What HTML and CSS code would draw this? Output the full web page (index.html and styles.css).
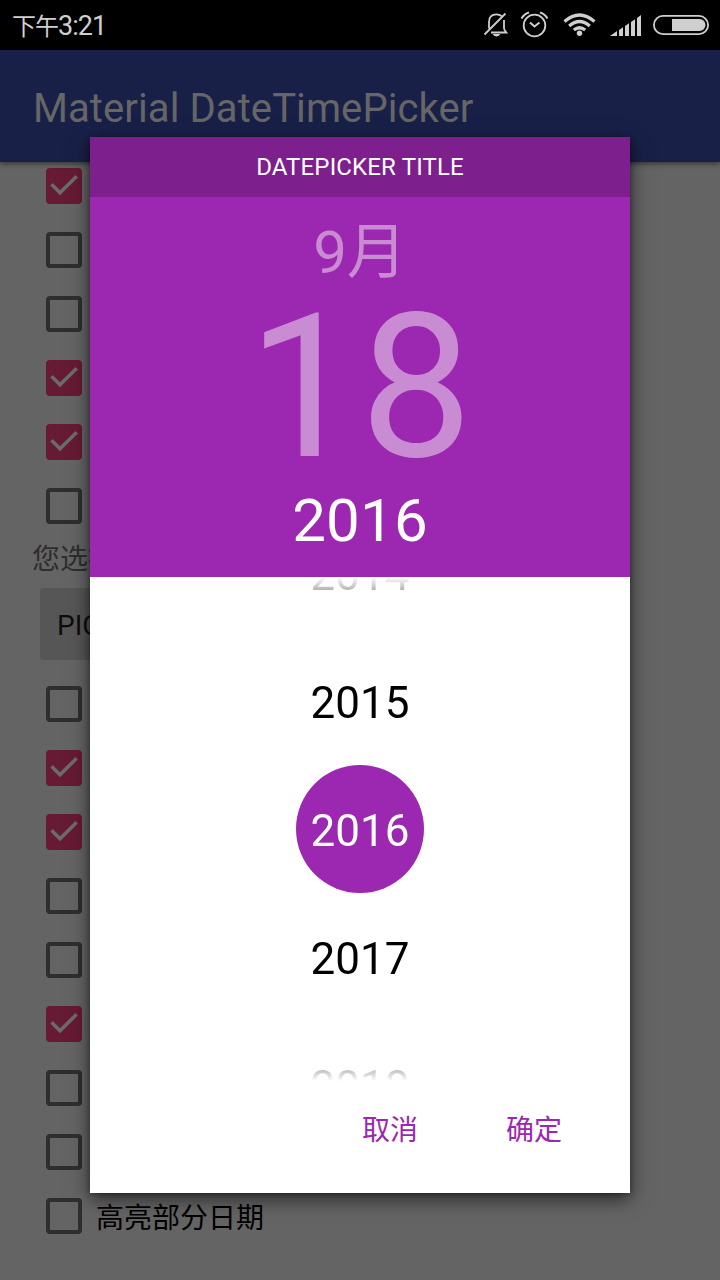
FILE: index.html
```
<!DOCTYPE html>
<html lang="zh-CN">
<head>
<meta charset="utf-8">
<title>Material DateTimePicker</title>
<link rel="stylesheet" href="styles.css">
</head>
<body>
<svg class="defs" width="0" height="0">
  <symbol id="on" viewBox="0 0 36 36"><rect width="36" height="36" rx="4" fill="#661a34"/><path d="M5.500 16.300 L14 24.800 L30.700 8.200" fill="none" stroke="#6b6b6b" stroke-width="3.600"/></symbol>
  <symbol id="off" viewBox="0 0 36 36"><rect x="2" y="2" width="32" height="32" rx="2" fill="none" stroke="#2e2e2e" stroke-width="4"/></symbol>
</svg>
<div class="screen">
  <header class="status">
    <div class="clock"><span class="ampm">下午</span><span class="time">3:21</span></div>
    <svg class="status-icons" width="250" height="50" viewBox="470 0 250 50" fill="none" stroke="#cfcfcf" stroke-width="1.800">
      <path d="M484.500 34.500 L505.500 13.500 M489 28.500 V22 C489 17 492 14.300 496.500 14.300 C498.500 14.300 500 14.800 501.500 16 M504 20 V28 C504 30 505 31 506.300 32.500 H491"/>
      <path d="M492.500 34 H500.500 Q496.500 39 492.500 34Z" fill="#cfcfcf" stroke="none"/>
      <circle cx="534.500" cy="25.500" r="10.800"/><path d="M530 22.500 L534.500 26.500 L539.500 22.500" stroke-width="2"/>
      <path d="M521.500 18.500 Q524 14 529 12.500 M547.500 18.500 Q545 14 540 12.500" stroke-width="2"/>
      <g stroke-width="3.200"><path d="M564.500 21.500 Q579.500 8.500 594.500 21.500 M569.200 26 Q579.500 17 589.800 26 M573.800 30 Q579.500 25.500 585.200 30"/></g>
      <circle cx="579.500" cy="33.300" r="2.700" fill="#cfcfcf" stroke="none"/>
      <path d="M610 36 L617 31 V36Z M619 30 L623 27.300 V36 H619Z M625 26 L629 23.300 V36 H625Z M631 22 L635 19.300 V36 H631Z M637 18 L641 15 V36 H637Z" fill="#cfcfcf" stroke="none"/>
      <rect x="653.900" y="15.900" width="54.200" height="18.200" rx="9.100"/>
      <path d="M672 19 H699.500 A6 6 0 0 1 699.500 31 H672Z" fill="#cfcfcf" stroke="none"/>
    </svg>
  </header>
  <div class="appbar">Material DateTimePicker</div>
  <main class="content">
    <div class="row"><svg class="box"><use href="#on"/></svg></div>
    <div class="row"><svg class="box"><use href="#off"/></svg></div>
    <div class="row"><svg class="box"><use href="#off"/></svg></div>
    <div class="row"><svg class="box"><use href="#on"/></svg></div>
    <div class="row"><svg class="box"><use href="#on"/></svg></div>
    <div class="row"><svg class="box"><use href="#off"/></svg></div>
    <div class="hint">您选择</div>
    <div class="pick">PICK</div>
    <div class="row"><svg class="box"><use href="#off"/></svg></div>
    <div class="row"><svg class="box"><use href="#on"/></svg></div>
    <div class="row"><svg class="box"><use href="#on"/></svg></div>
    <div class="row"><svg class="box"><use href="#off"/></svg></div>
    <div class="row"><svg class="box"><use href="#off"/></svg></div>
    <div class="row"><svg class="box"><use href="#on"/></svg></div>
    <div class="row"><svg class="box"><use href="#off"/></svg></div>
    <div class="row"><svg class="box"><use href="#off"/></svg></div>
    <div class="row"><svg class="box"><use href="#off"/></svg><span class="label">高亮部分日期</span></div>
  </main>
  <section class="dialog">
    <div class="title">DATEPICKER TITLE</div>
    <div class="date">
      <div class="month">9月</div>
      <div class="day">18</div>
      <div class="year">2016</div>
    </div>
    <div class="years">
      <div class="item">2014</div>
      <div class="item">2015</div>
      <div class="item selected">2016</div>
      <div class="item">2017</div>
      <div class="item">2018</div>
    </div>
    <div class="actions"><span>取消</span><span>确定</span></div>
  </section>
</div>
</body>
</html>
```
FILE: styles.css
```
* { box-sizing: border-box; }
body { margin: 0; font-family: Roboto, "Noto Sans CJK SC", sans-serif; }
.defs { position: absolute; }
.screen { position: relative; width: 720px; height: 1280px; overflow: hidden; background: #646464; }
.status { display: flex; justify-content: space-between; align-items: center; height: 50px; padding-left: 12px; background: #000; color: #cfcfcf; }
.clock { display: flex; align-items: baseline; line-height: 50px; padding-top: 3px; white-space: nowrap; }
.ampm { font-size: 24px; letter-spacing: -1px; }
.time { font-size: 27px; letter-spacing: -1px; }
.appbar { position: relative; height: 112px; padding: 3px 33px 0; line-height: 112px; font-size: 40px; letter-spacing: .09px; color: #666; background: #192048; box-shadow: 0 2px 5px rgba(0,0,0,.45); white-space: nowrap; }
.content { display: flex; flex-direction: column; margin-top: -8px; }
.row { display: flex; align-items: center; flex: none; height: 64px; padding-left: 46px; }
.box { width: 36px; height: 36px; flex: none; }
.label { margin-left: 14px; font-size: 28px; line-height: 40px; padding-top: 6px; color: #000; white-space: nowrap; }
.hint { height: 38px; padding: 3px 0 0 32px; line-height: 38px; font-size: 28px; color: #2e2e2e; }
.pick { width: 200px; height: 72px; margin: 12px 0 12px 40px; padding-left: 17px; border-radius: 4px; background: #565656; line-height: 76px; font-size: 28px; color: #0d0d0d; }
.dialog { position: absolute; left: 90px; top: 137px; width: 540px; height: 1056px; display: flex; flex-direction: column; background: #fff; box-shadow: 0 6px 18px rgba(0,0,0,.6), 0 1px 5px rgba(0,0,0,.35); }
.title { height: 60px; line-height: 60px; text-align: center; font-size: 24px; letter-spacing: .15px; color: #fff; background: #7d1f8d; }
.date { display: flex; flex-direction: column; align-items: center; height: 380px; padding-top: 21px; background: #9c27b0; color: #c98cd3; }
.month { font-size: 60px; line-height: 70px; height: 70px; }
.day { font-size: 200px; line-height: 200px; height: 198px; }
.year { font-size: 60px; line-height: 70px; height: 70px; letter-spacing: .2px; color: #fff; }
.years { display: flex; flex-direction: column; align-items: center; justify-content: center; height: 504px; overflow: hidden; mask-image: linear-gradient(to bottom, transparent 0, #000 44px, #000 460px, transparent 504px); }
.item { flex: none; width: 128px; height: 128px; padding-top: 2px; line-height: 128px; text-align: center; font-size: 44px; color: #000; }
.selected { border-radius: 50%; background: #9c27b0; color: #fff; }
.actions { display: flex; justify-content: flex-end; gap: 88px; padding: 30px 68px 0 0; line-height: 40px; font-size: 28px; color: #9c27b0; }
```
